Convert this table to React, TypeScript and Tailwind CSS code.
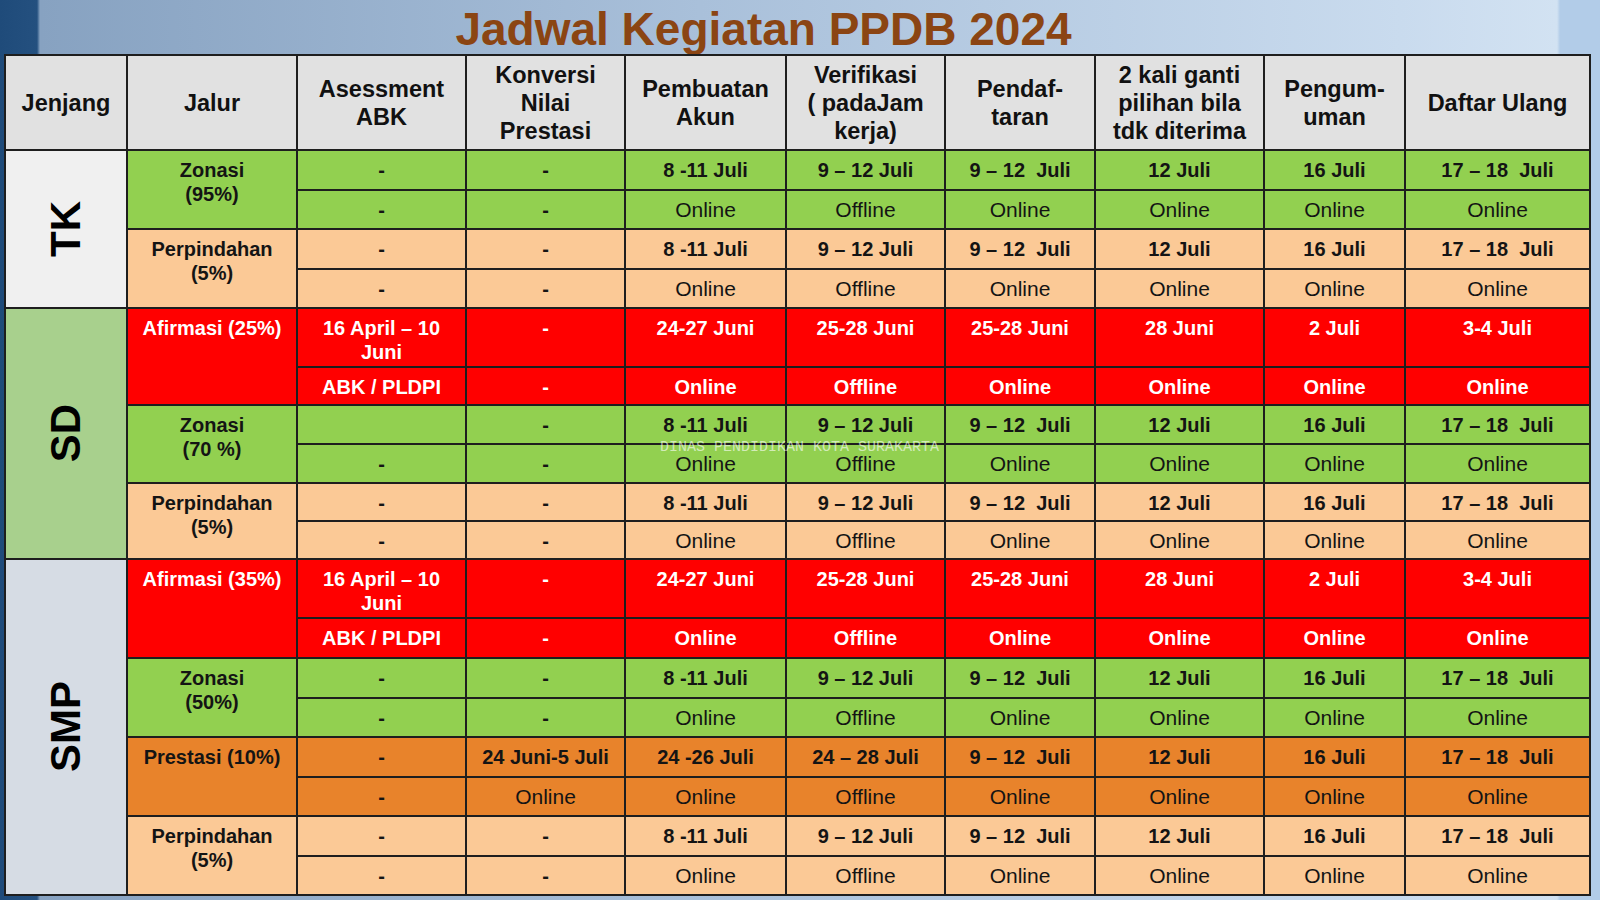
import React from "react";

type Tone = "green" | "peach" | "red" | "orange";

const toneBg: Record<Tone, string> = {
  green: "bg-[#92d050]",
  peach: "bg-[#fbc996]",
  red: "bg-[#ff0000]",
  orange: "bg-[#e8832b]",
};

const toneText: Record<Tone, string> = {
  green: "text-[#141414]",
  peach: "text-[#141414]",
  red: "text-white",
  orange: "text-[#141414]",
};

interface Group {
  jalur: string;
  tone: Tone;
  r1: string[];
  r2: string[];
}

interface Level {
  name: string;
  bg: string;
  span: string;
  groups: Group[];
}

const datesStd = ["8 -11 Juli", "9 – 12 Juli", "9 – 12  Juli", "12 Juli", "16 Juli", "17 – 18  Juli"];
const modeStd = ["Online", "Offline", "Online", "Online", "Online", "Online"];
const datesAf = ["24-27 Juni", "25-28 Juni", "25-28 Juni", "28 Juni", "2 Juli", "3-4 Juli"];

const afirmasi = (pct: string): Group => ({
  jalur: `Afirmasi (${pct})`,
  tone: "red",
  r1: ["16 April – 10\nJuni", "-", ...datesAf],
  r2: ["ABK / PLDPI", "-", ...modeStd],
});

const levels: Level[] = [
  {
    name: "TK",
    bg: "bg-[#f0f0f0]",
    span: "row-span-4",
    groups: [
      { jalur: "Zonasi\n(95%)", tone: "green", r1: ["-", "-", ...datesStd], r2: ["-", "-", ...modeStd] },
      { jalur: "Perpindahan\n(5%)", tone: "peach", r1: ["-", "-", ...datesStd], r2: ["-", "-", ...modeStd] },
    ],
  },
  {
    name: "SD",
    bg: "bg-[#a8d08d]",
    span: "row-span-6",
    groups: [
      afirmasi("25%"),
      { jalur: "Zonasi\n(70 %)", tone: "green", r1: ["", "-", ...datesStd], r2: ["-", "-", ...modeStd] },
      { jalur: "Perpindahan\n(5%)", tone: "peach", r1: ["-", "-", ...datesStd], r2: ["-", "-", ...modeStd] },
    ],
  },
  {
    name: "SMP",
    bg: "bg-[#d6dce4]",
    span: "row-span-8",
    groups: [
      afirmasi("35%"),
      { jalur: "Zonasi\n(50%)", tone: "green", r1: ["-", "-", ...datesStd], r2: ["-", "-", ...modeStd] },
      {
        jalur: "Prestasi (10%)",
        tone: "orange",
        r1: ["-", "24 Juni-5 Juli", "24 -26 Juli", "24 – 28 Juli", "9 – 12  Juli", "12 Juli", "16 Juli", "17 – 18  Juli"],
        r2: ["-", "Online", "Online", "Offline", "Online", "Online", "Online", "Online"],
      },
      { jalur: "Perpindahan\n(5%)", tone: "peach", r1: ["-", "-", ...datesStd], r2: ["-", "-", ...modeStd] },
    ],
  },
];

const headers = [
  "Jenjang",
  "Jalur",
  "Asessment\nABK",
  "Konversi\nNilai\nPrestasi",
  "Pembuatan\nAkun",
  "Verifikasi\n( padaJam\nkerja)",
  "Pendaf-\ntaran",
  "2 kali ganti\npilihan bila\ntdk diterima",
  "Pengum-\numan",
  "Daftar Ulang",
];

function Cell({ text, tone, bold }: { text: string; tone: Tone; bold: boolean }) {
  return (
    <div
      className={`${toneBg[tone]} ${toneText[tone]} ${
        bold ? "font-bold text-[20px]" : "font-normal text-[21px]"
      } whitespace-pre-wrap text-center leading-[24px] pt-[7px]`}
    >
      {text}
    </div>
  );
}

export default function App() {
  return (
    <div className="w-[1600px] h-[900px] overflow-hidden bg-[linear-gradient(90deg,#1f4b7a_0px,#24507f_37px,#87a2c1_40px,#a9c0da_700px,#c9dbee_1400px,#d2e2f2_1557px,#b2cce8_1560px,#b2cce8_1600px)] [font-family:'Liberation_Sans',Arial,sans-serif]">
      <div className="h-[54px] pt-[6px] pr-[73px] text-center text-[46px] leading-[46px] font-bold text-[#8b4513]">
        Jadwal Kegiatan PPDB 2024
      </div>
      <div className="relative ml-[4px] w-fit">
        <div className="grid grid-cols-[120px_168px_167px_157px_159px_157px_148px_167px_139px_183px] grid-rows-[93px_38px_37px_38px_37px_57px_36px_37px_37px_36px_36px_57px_38px_38px_37px_38px_37px_38px_37px] gap-[2px] p-[2px] bg-[#1e1e1e]">
          {headers.map((h) => (
            <div
              key={h}
              className="bg-[#e1e1e1] flex items-center justify-center text-center whitespace-pre-line text-[23.5px] leading-[28px] font-bold text-[#111]"
            >
              {h}
            </div>
          ))}
          {levels.map((lv) => (
            <React.Fragment key={lv.name}>
              <div className={`${lv.bg} ${lv.span} flex items-center justify-center`}>
                <span className="[writing-mode:vertical-rl] rotate-180 text-[42px] leading-none font-bold text-black">
                  {lv.name}
                </span>
              </div>
              {lv.groups.map((g, gi) => (
                <React.Fragment key={gi}>
                  <div
                    className={`${toneBg[g.tone]} ${toneText[g.tone]} row-span-2 whitespace-pre-line text-center font-bold text-[20px] leading-[24px] pt-[7px]`}
                  >
                    {g.jalur}
                  </div>
                  {g.r1.map((t, i) => (
                    <Cell key={`a${i}`} text={t} tone={g.tone} bold={true} />
                  ))}
                  {g.r2.map((t, i) => (
                    <Cell key={`b${i}`} text={t} tone={g.tone} bold={g.tone === "red" || t === "-"} />
                  ))}
                </React.Fragment>
              ))}
            </React.Fragment>
          ))}
        </div>
        <div className="absolute left-[656px] top-[386px] text-[15px] leading-[15px] [font-family:'Liberation_Mono',monospace] text-white/60 whitespace-pre pointer-events-none">
          DINAS PENDIDIKAN KOTA SURAKARTA
        </div>
      </div>
    </div>
  );
}
